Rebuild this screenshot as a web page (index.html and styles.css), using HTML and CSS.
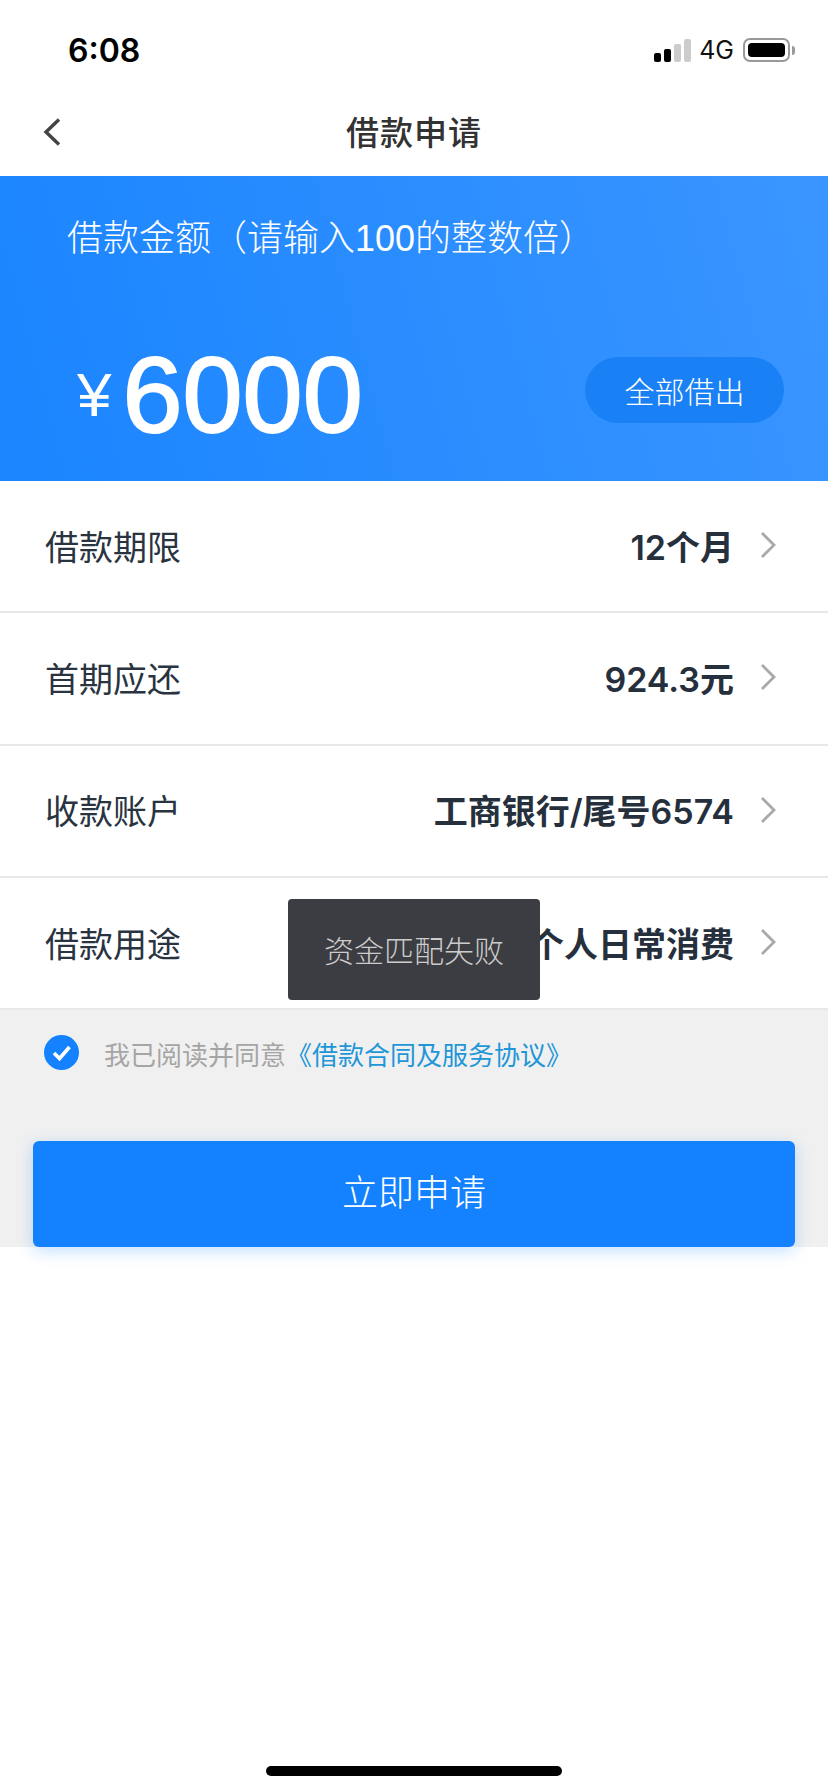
FILE: index.html
```html
<!DOCTYPE html>
<html lang="zh-CN">
<head>
    <meta charset="UTF-8">
    <meta name="viewport" content="width=device-width, initial-scale=1.0">
    <title>借款申请</title>
    <link rel="stylesheet" href="styles.css">
</head>
<body>
    <div class="page">
        <!-- Status bar -->
        <div class="status-bar">
            <span class="time">6:08</span>
            <div class="status-icons">
                <div class="signal">
                    <i class="bar bar1"></i>
                    <i class="bar bar2"></i>
                    <i class="bar bar3"></i>
                    <i class="bar bar4"></i>
                </div>
                <span class="network">4G</span>
                <div class="battery"><div class="battery-fill"></div></div>
                <div class="battery-cap"></div>
            </div>
        </div>

        <div class="nav">
            <svg class="back" width="20" height="30" viewBox="0 0 20 30">
                <path d="M17 2.5 L4 15 L17 27.5" fill="none" stroke="#444" stroke-width="3.4"/>
            </svg>
            <span class="nav-title">借款申请</span>
        </div>

        <div class="banner">
            <div class="banner-label">借款金额（请输入100的整数倍）</div>
            <div class="amount-line">
                <div class="amount">
                    <span class="yen">¥</span>
                    <span class="num">6000</span>
                </div>
                <button class="all-btn">全部借出</button>
            </div>
        </div>

        <div class="list">
            <div class="row">
                <span class="row-label">借款期限</span>
                <span class="row-value">12个月</span>
                <svg class="chevron" width="16" height="28" viewBox="0 0 16 28"><path d="M2 2 L14 14 L2 26" fill="none" stroke="#a9a9a9" stroke-width="2.8"/></svg>
            </div>
            <div class="row">
                <span class="row-label">首期应还</span>
                <span class="row-value">924.3元</span>
                <svg class="chevron" width="16" height="28" viewBox="0 0 16 28"><path d="M2 2 L14 14 L2 26" fill="none" stroke="#a9a9a9" stroke-width="2.8"/></svg>
            </div>
            <div class="row">
                <span class="row-label">收款账户</span>
                <span class="row-value">工商银行/尾号6574</span>
                <svg class="chevron" width="16" height="28" viewBox="0 0 16 28"><path d="M2 2 L14 14 L2 26" fill="none" stroke="#a9a9a9" stroke-width="2.8"/></svg>
            </div>
            <div class="row">
                <span class="row-label">借款用途</span>
                <span class="row-value">个人日常消费</span>
                <svg class="chevron" width="16" height="28" viewBox="0 0 16 28"><path d="M2 2 L14 14 L2 26" fill="none" stroke="#a9a9a9" stroke-width="2.8"/></svg>
            </div>
        </div>

        <div class="bottom">
            <div class="agree">
                <svg class="check" width="35" height="35" viewBox="0 0 35 35">
                    <circle cx="17.5" cy="17.5" r="17.5" fill="#1482ff"/>
                    <path d="M10 18 L15.5 23.5 L25.5 12" fill="none" stroke="#fff" stroke-width="3.6"/>
                </svg>
                <span class="agree-text">我已阅读并同意<a class="agree-link">《借款合同及服务协议》</a></span>
            </div>
            <button class="submit">立即申请</button>
        </div>

        <!-- Toast over the list -->
        <div class="toast">资金匹配失败</div>

        <div class="home-bar"></div>
    </div>
</body>
</html>
```

FILE: styles.css
```css
body {
    margin: 0;
    background-color: #fff;
    font-family: "Liberation Sans", "Noto Sans CJK SC", sans-serif;
}

.page {
    position: relative;
    width: 828px;
    height: 1792px;
    overflow: hidden;
}

/* Status bar */
.status-bar {
    height: 88px;
    padding: 12px 33px 0 68px;
    display: flex;
    align-items: center;
    justify-content: space-between;
    box-sizing: border-box;
}

.time {
    font-family: Inter, sans-serif;
    font-size: 32px;
    font-weight: 600;
    color: #000;
}

.status-icons {
    display: flex;
    align-items: center;
}

.signal {
    display: flex;
    align-items: flex-end;
    gap: 3px;
    height: 24px;
    margin-right: 8px;
}

.bar {
    display: block;
    width: 7px;
    border-radius: 2px;
    background-color: #000;
}

.bar1 { height: 9px; }
.bar2 { height: 13px; }
.bar3 { height: 18px; background-color: #ccc; }
.bar4 { height: 23px; background-color: #ccc; }

.network {
    font-family: Inter, sans-serif;
    font-size: 25px;
    color: #111;
    margin-right: 9px;
}

.battery {
    width: 47px;
    height: 24px;
    padding: 3px;
    box-sizing: border-box;
    border: 2px solid #999;
    border-radius: 7px;
}

.battery-fill {
    width: 100%;
    height: 100%;
    background-color: #000;
    border-radius: 4px;
}

.battery-cap {
    width: 3px;
    height: 9px;
    margin-left: 2px;
    background-color: #999;
    border-radius: 0 3px 3px 0;
}

/* Navigation */
.nav {
    height: 88px;
    display: flex;
    align-items: center;
    justify-content: center;
    position: relative;
}

.back {
    position: absolute;
    left: 42px;
    top: 29px;
}

.nav-title {
    font-size: 33px;
    font-weight: 500;
    color: #333;
    letter-spacing: 1px;
    margin-top: -2px;
}

/* Banner */
.banner {
    height: 305px;
    padding: 38px 44px 0 67px;
    box-sizing: border-box;
    background: linear-gradient(75deg, #1a85ff, #3a95ff);
    color: #fff;
}

.banner-label {
    font-size: 36px;
    font-weight: 300;
    line-height: 50px;
}

.amount-line {
    display: flex;
    align-items: center;
    justify-content: space-between;
    margin-top: 74px;
}

.amount {
    display: flex;
    align-items: center;
}

.yen {
    font-size: 62px;
    margin-left: 10px;
    margin-right: 11px;
}

.num {
    font-size: 108px;
    line-height: 110px;
    margin-top: 2px;
    -webkit-text-stroke: 2px #fff;
}

.all-btn {
    width: 199px;
    height: 66px;
    margin-top: -8px;
    border: none;
    border-radius: 33px;
    background-color: #1a80f5;
    color: #fff;
    font-family: inherit;
    font-size: 30px;
    font-weight: 300;
}

/* List */
.row {
    height: 132.3px;
    padding: 0 52px 0 45px;
    box-sizing: border-box;
    display: flex;
    align-items: center;
    border-bottom: 2px solid #e8e8e8;
}

.row-label {
    flex: 1;
    font-size: 34px;
    color: #2a3340;
    margin-top: -2px;
}

.row-value {
    font-family: Inter, "Noto Sans CJK SC", sans-serif;
    font-size: 34px;
    font-weight: 600;
    color: #26303d;
    margin-top: -2px;
}

.chevron {
    margin-left: 26px;
    margin-top: -2px;
}

/* Bottom */
.bottom {
    height: 237px;
    padding: 23px 33px 0;
    box-sizing: border-box;
    background-color: #f0f0f0;
}

.agree {
    display: flex;
    align-items: center;
    padding-left: 11px;
}

.agree-text {
    margin-left: 25px;
    margin-top: 2px;
    font-size: 26px;
    color: #a5a5a5;
}

.agree-link {
    color: #1f96d8;
}

.submit {
    display: block;
    width: 100%;
    height: 106px;
    margin-top: 69px;
    padding: 0 0 8px;
    border: none;
    border-radius: 6px;
    background-color: #1482ff;
    box-shadow: 0 4px 16px rgba(20, 130, 255, 0.25);
    color: #fff;
    font-family: inherit;
    font-size: 36px;
    font-weight: 300;
}

/* Toast */
.toast {
    position: absolute;
    left: 288px;
    top: 899px;
    width: 252px;
    height: 101px;
    line-height: 105px;
    text-align: center;
    background-color: #3c3d42;
    border-radius: 4px;
    color: #ccc;
    font-size: 30px;
    font-weight: 300;
}

.home-bar {
    position: absolute;
    left: 266px;
    top: 1766px;
    width: 296px;
    height: 10px;
    background-color: #000;
    border-radius: 5px;
}
```
